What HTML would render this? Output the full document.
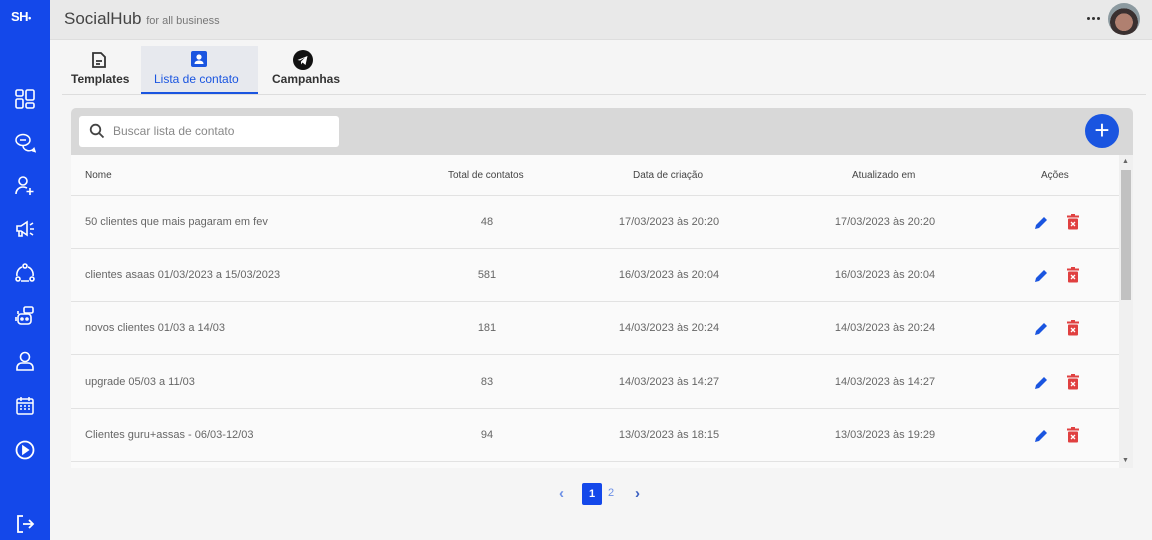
<!DOCTYPE html>
<html><head><meta charset="utf-8"><style>
*{margin:0;padding:0;box-sizing:border-box}
body{width:1152px;height:540px;overflow:hidden;background:#f5f5f5;font-family:"Liberation Sans",Roboto,sans-serif;position:relative}
.side{position:absolute;left:0;top:0;width:50px;height:540px;background:#1448ea}
.side svg{position:absolute;left:14px}
.hdr{position:absolute;left:50px;top:0;right:0;height:40px;background:#e9e9e9;border-bottom:1px solid #dedede}
.abs{position:absolute}
.row{position:absolute;left:71px;width:1048px;height:53px;border-bottom:1px solid #e2e2e2;font-size:11px;color:#666}
.row span{position:absolute;top:20px}
</style></head><body>
<div class="side">
<div class="abs" style="left:11px;top:9px;color:#fff;font-weight:bold;font-size:13px;letter-spacing:-0.5px">SH<span style="font-size:9px">•</span></div>
<svg style="top:88px" width="22" height="22" viewBox="0 0 22 22" fill="none" stroke="#fff" stroke-width="1.6"><rect x="2" y="2" width="7" height="6" rx="1.5"/><rect x="2" y="11" width="7" height="9" rx="1.5"/><rect x="12" y="2" width="8" height="10" rx="1.5"/><rect x="12" y="15" width="8" height="5" rx="1.5"/></svg>
<svg style="top:132px" width="22" height="22" viewBox="0 0 22 22" fill="none" stroke="#fff" stroke-width="1.5"><ellipse cx="9" cy="8" rx="7" ry="5.5"/><path d="M9 13.5a6 5 0 0 0 11 3l1 3-3-1"/><path d="M6 8h6"/></svg>
<svg style="top:175px" width="22" height="22" viewBox="0 0 22 22" fill="none" stroke="#fff" stroke-width="1.6"><circle cx="9" cy="6" r="4"/><path d="M2 19c0-4 3-7 7-7 2 0 3 .5 4 1"/><path d="M16 13v7M12.5 16.5h7"/></svg>
<svg style="top:218px" width="22" height="22" viewBox="0 0 22 22" fill="none" stroke="#fff" stroke-width="1.6"><path d="M3 8h4l6-4v13l-6-4H3z"/><path d="M5 13v5h3v-5"/><path d="M16 7l3-2M16 11h4M16 15l3 2"/></svg>
<svg style="top:262px" width="22" height="22" viewBox="0 0 22 22" fill="none" stroke="#fff" stroke-width="1.6"><circle cx="11" cy="4" r="2"/><circle cx="4" cy="17" r="2"/><circle cx="18" cy="17" r="2"/><path d="M8 5a8 8 0 0 0-5 9M14 5a8 8 0 0 1 5 9M7 19h8"/></svg>
<svg style="top:305px" width="22" height="22" viewBox="0 0 22 22" fill="none" stroke="#fff" stroke-width="1.6"><rect x="4" y="9" width="13" height="10" rx="3"/><rect x="10" y="2" width="9" height="6" rx="1.5"/><circle cx="8" cy="14" r="1"/><circle cx="13" cy="14" r="1"/><path d="M2 12v4M4 6v3"/></svg>
<svg style="top:350px" width="22" height="22" viewBox="0 0 22 22" fill="none" stroke="#fff" stroke-width="1.6"><circle cx="11" cy="7" r="4.5"/><path d="M3 20v-2c0-3 2-5 5-5h6c3 0 5 2 5 5v2z"/></svg>
<svg style="top:395px" width="22" height="22" viewBox="0 0 22 22" fill="none" stroke="#fff" stroke-width="1.5"><rect x="3" y="4" width="16" height="15" rx="1.5"/><path d="M3 8h16M7 2v4M15 2v4M6 11h2M10 11h2M14 11h2M6 14h2M10 14h2M14 14h2"/></svg>
<svg style="top:439px" width="22" height="22" viewBox="0 0 22 22" fill="none" stroke="#fff" stroke-width="1.8"><circle cx="11" cy="11" r="8.5"/><path d="M9 7.5v7l5-3.5z" fill="#fff"/></svg>
<svg style="top:513px" width="22" height="22" viewBox="0 0 22 22" fill="none" stroke="#fff" stroke-width="1.8"><path d="M9 3H4v16h5"/><path d="M9 11h10M15 7l4 4-4 4"/></svg>
</div>
<div class="hdr">
<div class="abs" style="left:14px;top:9px;font-size:17px;color:#444">SocialHub <span style="font-size:11px;color:#777">for all business</span></div>
<div class="abs" style="left:1037px;top:17px;width:3px;height:3px;border-radius:50%;background:#333"></div>
<div class="abs" style="left:1042px;top:17px;width:3px;height:3px;border-radius:50%;background:#333"></div>
<div class="abs" style="left:1047px;top:17px;width:3px;height:3px;border-radius:50%;background:#333"></div>
<div class="abs" style="left:1058px;top:3px;width:32px;height:32px;border-radius:50%;background:radial-gradient(circle at 50% 60%,#b08070 0 35%,#3a3030 36% 55%,#8c9aa0 56%)"></div>
</div>
<div class="abs" style="left:141px;top:46px;width:117px;height:48px;background:#e7e9ee;border-bottom:2px solid #1a55e0"></div>
<div class="abs" style="left:62px;top:94px;width:1084px;height:1px;background:#ddd"></div>
<svg class="abs" style="left:91px;top:51px" width="16" height="18" viewBox="0 0 16 18" fill="none" stroke="#333" stroke-width="1.8"><path d="M2 2h8l4 4v10H2z"/><path d="M5 10h6M5 13h4"/></svg>
<div class="abs" style="left:71px;top:72px;font-size:12px;color:#333;font-weight:bold">Templates</div>
<svg class="abs" style="left:191px;top:51px" width="16" height="16" viewBox="0 0 16 16"><rect width="16" height="16" rx="2" fill="#1a55e0"/><circle cx="8" cy="6" r="2.6" fill="#fff"/><path d="M3.5 13c0-2.5 2-3.5 4.5-3.5s4.5 1 4.5 3.5z" fill="#fff"/></svg>
<div class="abs" style="left:154px;top:72px;font-size:12px;color:#1a55e0">Lista de contato</div>
<svg class="abs" style="left:293px;top:50px" width="20" height="20" viewBox="0 0 20 20"><circle cx="10" cy="10" r="10" fill="#111"/><path d="M4.5 10l10-4-2 9-3-2.5-1.5 2v-3l4-4-5 3z" fill="#fff"/></svg>
<div class="abs" style="left:272px;top:72px;font-size:12px;color:#333;font-weight:bold">Campanhas</div>
<div class="abs" style="left:71px;top:108px;width:1062px;height:47px;background:#d8d8d8;border-radius:5px 5px 0 0"></div>
<div class="abs" style="left:79px;top:116px;width:260px;height:31px;background:#fff;border-radius:3px"></div>
<svg class="abs" style="left:89px;top:123px" width="16" height="16" viewBox="0 0 16 16" fill="none" stroke="#444" stroke-width="1.8"><circle cx="6.5" cy="6.5" r="4.8"/><path d="M10 10l4.5 4.5"/></svg>
<div class="abs" style="left:113px;top:124px;font-size:12px;color:#888">Buscar lista de contato</div>
<div class="abs" style="left:1085px;top:114px;width:34px;height:34px;border-radius:50%;background:#1a55e0;color:#fff;font-size:26px;line-height:32px;text-align:center">+</div>
<div class="abs" style="left:71px;top:155px;width:1048px;height:313px;background:#fafafa"></div>
<div class="abs" style="left:1119px;top:155px;width:14px;height:313px;background:#f0f0f0"></div>
<div class="abs" style="left:1121px;top:170px;width:10px;height:130px;background:#c1c1c1"></div>
<div class="abs" style="left:1122px;top:158px;font-size:7px;color:#666">▲</div>
<div class="abs" style="left:1122px;top:457px;font-size:7px;color:#666">▼</div>
<div class="row" style="top:155px;height:41px;font-size:10px;color:#444"><span style="left:14px;top:15px">Nome</span><span style="left:377px;top:15px">Total de contatos</span><span style="left:562px;top:15px">Data de criação</span><span style="left:781px;top:15px">Atualizado em</span><span style="left:970px;top:15px">Ações</span></div>
<div id="rows"></div>
<script>
var d=[["50 clientes que mais pagaram em fev","48","17/03/2023 às 20:20","17/03/2023 às 20:20"],["clientes asaas 01/03/2023 a 15/03/2023","581","16/03/2023 às 20:04","16/03/2023 às 20:04"],["novos clientes 01/03 a 14/03","181","14/03/2023 às 20:24","14/03/2023 às 20:24"],["upgrade 05/03 a 11/03","83","14/03/2023 às 14:27","14/03/2023 às 14:27"],["Clientes guru+assas - 06/03-12/03","94","13/03/2023 às 18:15","13/03/2023 às 19:29"]];
var h="";d.forEach(function(r,i){var t=196+i*53.2;h+='<div class="row" style="top:'+t+'px"><span style="left:14px">'+r[0]+'</span><span style="left:396px;width:40px;text-align:center">'+r[1]+'</span><span style="left:538px;width:120px;text-align:center">'+r[2]+'</span><span style="left:754px;width:120px;text-align:center">'+r[3]+'</span>'+
'<svg style="position:absolute;left:962px;top:19px" width="16" height="16" viewBox="0 0 16 16"><path d="M2 14l1-4 8-8 3 3-8 8z" fill="#1a55e0"/></svg>'+
'<svg style="position:absolute;left:996px;top:18px" width="12" height="16" viewBox="0 0 12 16"><rect x="0" y="1.5" width="12" height="2" fill="#e04040"/><rect x="4" y="0" width="4" height="2" fill="#e04040"/><rect x="1" y="4.5" width="10" height="11" rx="1" fill="#e04040"/><path d="M4 8l4 4M8 8l-4 4" stroke="#fff" stroke-width="1.3"/></svg></div>';});
document.getElementById("rows").innerHTML=h;
</script>
<div class="abs" style="left:559px;top:485px;font-size:15px;color:#6b8fe6;font-weight:bold">‹</div>
<div class="abs" style="left:582px;top:483px;width:20px;height:22px;background:#1448ea;border-radius:2px;color:#fff;font-size:11px;font-weight:bold;text-align:center;line-height:22px">1</div>
<div class="abs" style="left:608px;top:487px;font-size:11px;color:#6b8fe6">2</div>
<div class="abs" style="left:635px;top:485px;font-size:15px;color:#3a5fc0;font-weight:bold">›</div>
</body></html>
